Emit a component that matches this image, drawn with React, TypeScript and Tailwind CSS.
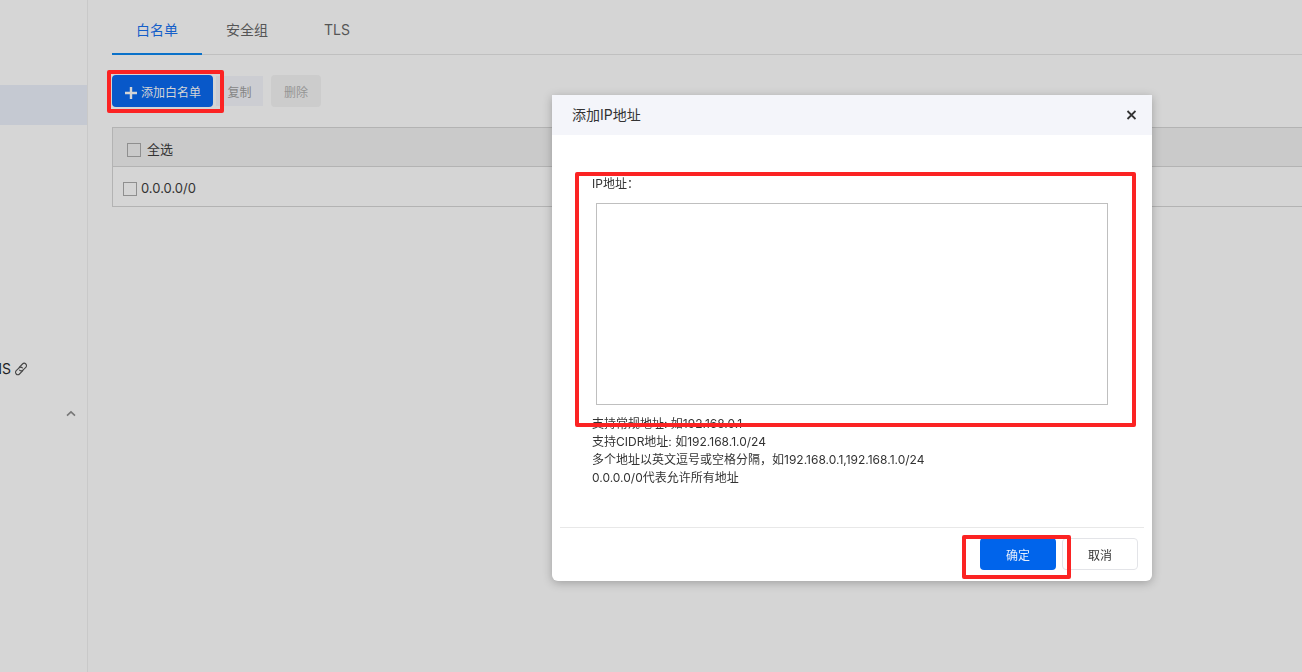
/* IP whitelist page with the "add IP address" dialog open on top of it. */
import { useState } from "react";

const TABS = ["白名单", "安全组", "TLS"];

const ADDRESSES = ["0.0.0.0/0"];

const HINTS = [
  "支持常规地址: 如192.168.0.1",
  "支持CIDR地址: 如192.168.1.0/24",
  "多个地址以英文逗号或空格分隔，如192.168.0.1,192.168.1.0/24",
  "0.0.0.0/0代表允许所有地址",
];

const checkboxClass = "block size-3.5 shrink-0 appearance-none border border-[#8f8f8f] checked:bg-[#0a58ca]";

// Red frame drawn around the parts the user has to touch
function Marker({ className }: { className: string }) {
  return <div className={`pointer-events-none absolute rounded-xs border-4 border-[#fb2323] ${className}`} />;
}

function LinkIcon() {
  return (
    <svg className="size-3.5 shrink-0" viewBox="0 0 14 14" fill="none" stroke="#444" strokeWidth="1.1" strokeLinecap="round">
      <path d="M5.2 5.3 8.5 2a2.3 2.3 0 0 1 3.3 3.3L8.9 8.2a2.3 2.3 0 0 1-3.3 0" />
      <path d="M8.8 8.7 5.5 12a2.3 2.3 0 0 1-3.3-3.3l2.9-2.9a2.3 2.3 0 0 1 3.3 0" />
    </svg>
  );
}

function Sidebar() {
  return (
    <aside className="w-22 shrink-0 overflow-hidden border-r border-[#c9c9c9] bg-[#d6d6d6] pt-[85px]">
      <a href="#" aria-label="当前页面" className="block h-10 bg-[#c5c9d2]" />
      <a href="#" className="mt-[234px] flex h-5 w-7 items-center justify-end gap-[3px] text-sm text-[#1f1f24]">
        <span>NS</span>
        <LinkIcon />
      </a>
      <button type="button" aria-label="收起" className="mt-6 ml-auto mr-2.5 flex h-5 w-3 items-center justify-center">
        <svg className="h-2 w-3" viewBox="0 0 12 8" fill="none" stroke="#777" strokeWidth="1.6">
          <path d="M2 6.6 6 2.8l4 3.8" />
        </svg>
      </button>
    </aside>
  );
}

function AddressTable() {
  return (
    <table className="mt-5 w-full border-collapse border border-r-0 border-[#b3b3b3] text-[13px] text-[#333]">
      <thead>
        <tr className="h-[39px] border-b border-[#b3b3b3] bg-[#cacaca]">
          <th className="pt-1.5 pl-3.5 text-left font-normal">
            <label className="flex items-center gap-1.5">
              <input type="checkbox" className={checkboxClass} />
              全选
            </label>
          </th>
        </tr>
      </thead>
      <tbody>
        {ADDRESSES.map((address) => (
          <tr key={address} className="h-10">
            <td className="pt-1 pl-2.5">
              <label className="flex items-center gap-1">
                <input type="checkbox" className={checkboxClass} />
                {address}
              </label>
            </td>
          </tr>
        ))}
      </tbody>
    </table>
  );
}

function AddDialog({ onClose }: { onClose: () => void }) {
  const [value, setValue] = useState("");

  return (
    <div className="fixed inset-0 flex items-start justify-end pt-[95px] pr-[150px]">
      <section role="dialog" aria-labelledby="dialog-title" className="w-[600px] rounded-b-md bg-white text-xs text-[#333] shadow-[0_2px_10px_rgba(0,0,0,0.25)]">
        <header className="flex h-10 items-center justify-between bg-[#f4f5fa] px-4 pl-5">
          <h2 id="dialog-title" className="text-sm">添加IP地址</h2>
          <button type="button" aria-label="关闭" onClick={onClose}>
            <svg className="size-2.5" viewBox="0 0 10 10" stroke="#333" strokeWidth="1.8">
              <path d="M1.5 1l8 8M9.5 1l-8 8" />
            </svg>
          </button>
        </header>

        <div className="relative px-10 pt-10">
          <label htmlFor="ip" className="block leading-[18px]">IP地址：</label>
          <textarea
            id="ip"
            value={value}
            onChange={(e) => setValue(e.target.value)}
            className="mx-1 mt-2.5 block h-[202px] w-[512px] resize-none border border-[#bfbfbf] p-2 outline-none"
          />
          <div className="mt-2.5 leading-[18px]">
            {HINTS.map((hint) => (
              <p key={hint}>{hint}</p>
            ))}
          </div>
          <Marker className="top-[37px] right-4 left-[23px] h-[255px]" />
        </div>

        <footer className="relative mx-2 mt-10 flex h-[54px] items-center justify-end gap-1.5 border-t border-[#e8e8e8] pr-1.5 pb-0.5">
          <button type="button" className="h-8 w-[76px] rounded bg-[#0064eb] pt-1 text-[#e6effd]">确定</button>
          <button type="button" onClick={onClose} className="h-8 w-[76px] rounded border border-[#e3e4e8] pt-1">取消</button>
          <Marker className="top-[7px] right-[73px] h-11 w-[109px]" />
        </footer>
      </section>
    </div>
  );
}

export default function App() {
  const [activeTab, setActiveTab] = useState(TABS[0]);
  const [open, setOpen] = useState(true);

  return (
    <div className="flex min-h-screen bg-[#d5d5d5] font-['Inter','Noto_Sans_CJK_SC',sans-serif]">
      <Sidebar />
      <main className="min-w-0 flex-1 pl-6">
        <nav className="flex h-[55px] border-b border-[#c0c0c0] text-sm">
          {TABS.map((tab) => (
            <button
              key={tab}
              type="button"
              onClick={() => setActiveTab(tab)}
              className={`h-[55px] w-[90px] border-b-2 pt-1.5 ${tab === activeTab ? "border-[#0a71c9] text-[#155fc9]" : "border-transparent text-[#555]"}`}
            >
              {tab}
            </button>
          ))}
        </nav>

        <div className="relative mt-5 flex items-center text-xs">
          <button type="button" onClick={() => setOpen(true)} className="flex h-8 items-center gap-[3px] rounded bg-[#0858c9] px-3 pt-1 text-[#d5d5d5]">
            <svg className="size-3.5" viewBox="0 0 14 14" stroke="currentColor" strokeWidth="2.4">
              <path d="M7 1v12M1 7h12" />
            </svg>
            添加白名单
          </button>
          <button type="button" disabled className="ml-[3px] h-[30px] w-[47px] bg-[#cccdd2] pt-1 text-[#858585]">复制</button>
          <button type="button" disabled className="ml-2 h-8 w-[50px] rounded bg-[#cccccc] pt-1 text-[#959595]">删除</button>
          <Marker className="-top-[5px] -left-[5px] h-[43px] w-[117px]" />
        </div>

        <AddressTable />
      </main>
      {open && <AddDialog onClose={() => setOpen(false)} />}
    </div>
  );
}
